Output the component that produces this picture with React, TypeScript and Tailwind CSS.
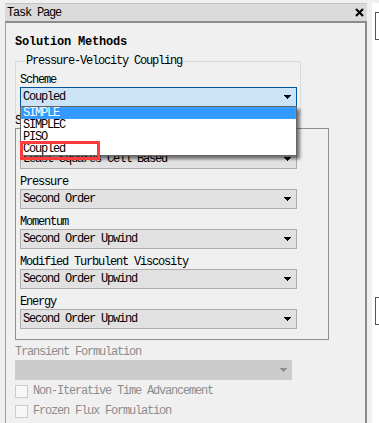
import React from 'react';

const Arrow = ({ disabled = false }: { disabled?: boolean }) => (
  <svg width="7" height="4" viewBox="0 0 7 4" shapeRendering="crispEdges" className="shrink-0">
    <g fill={disabled ? '#8f8f8f' : '#000'}>
      <rect x="0" y="0" width="7" height="1" />
      <rect x="1" y="1" width="5" height="1" />
      <rect x="2" y="2" width="3" height="1" />
      <rect x="3" y="3" width="1" height="1" />
    </g>
  </svg>
);

const Combo = ({ value, active = false }: { value: string; active?: boolean }) => (
  <div
    className={
      active
        ? 'w-[277px] h-[20px] flex items-center justify-between pl-[2px] pr-[5px] border border-[#005499] bg-[#cce4f7]'
        : 'w-[277px] h-[20px] flex items-center justify-between pl-[2px] pr-[5px] border border-[#adadad] bg-[#e1e1e1]'
    }
  >
    <span className="leading-[14px]">{value}</span>
    <Arrow />
  </div>
);

const Field = ({ label, value }: { label: string; value: string }) => (
  <div className="flex flex-col">
    <span className="h-[14px] leading-[14px]">{label}</span>
    <Combo value={value} />
  </div>
);

const Check = ({ label }: { label: string }) => (
  <div className="flex items-center gap-[5px] h-[13px]">
    <div className="w-[13px] h-[13px] border border-[#cccccc] bg-[#f7f7f7]" />
    <span className="leading-[13px] text-[#8d8d8d]">{label}</span>
  </div>
);

export default function App() {
  const items = ['SIMPLE', 'SIMPLEC', 'PISO', 'Coupled'];

  return (
    <div className="relative w-[379px] h-[423px] overflow-hidden flex bg-[#f0f0f0] text-black font-['Liberation_Mono',monospace] text-[12px] tracking-[-1.2px]">
      {/* Task page */}
      <div className="w-[367px] pl-[5px] flex flex-col">
        <div className="mt-[3px] h-[18px] flex justify-between pl-[2px] pr-[3px] bg-[#dadada] border-t border-[#c4c4c4]">
          <span className="pt-[2px] leading-[14px]">Task Page</span>
          <svg width="9" height="9" viewBox="0 0 9 9" className="mt-[4px]">
            <path d="M1 1 L8 8 M8 1 L1 8" stroke="#000" strokeWidth="2" />
          </svg>
        </div>

        <div className="flex-1 flex flex-col border-t-2 border-t-[#8a8a8a] border-l border-l-[#a0a0a0] border-r-2 border-r-[#8a8a8a] bg-[#f0f0f0]">
          <h2 className="mt-[12px] ml-[9px] text-[12px] tracking-[-0.2px] leading-[14px] font-bold">
            Solution Methods
          </h2>

          {/* Pressure-Velocity Coupling */}
          <div className="relative mt-[12px] ml-[9px] w-[286px] border border-[#d9d9d9] pt-[11px] pl-[4px] pb-[7px]">
            <span className="absolute -top-[8px] left-[9px] px-[1px] leading-[14px] bg-[#f0f0f0]">
              Pressure-Velocity Coupling
            </span>
            <span className="block h-[14px] leading-[14px]">Scheme</span>
            <Combo value="Coupled" active />
          </div>

          {/* Spatial Discretization */}
          <span className="ml-[9px] h-[13px] leading-[13px]">Spatial Discretization</span>
          <div className="ml-[9px] w-[314px] border border-[#8e8f8f] pt-[6px] pl-[4px] pb-[10px] flex flex-col gap-[6px]">
            <Field label="Gradient" value="Least Squares Cell Based" />
            <Field label="Pressure" value="Second Order" />
            <Field label="Momentum" value="Second Order Upwind" />
            <Field label="Modified Turbulent Viscosity" value="Second Order Upwind" />
            <Field label="Energy" value="Second Order Upwind" />
          </div>

          <span className="mt-[5px] ml-[9px] h-[14px] leading-[14px] text-[#8d8d8d]">Transient Formulation</span>
          <div className="mt-[1px] ml-[9px] w-[277px] h-[20px] flex items-center justify-end pr-[5px] bg-[#cccccc]">
            <Arrow disabled />
          </div>
          <div className="mt-[5px] ml-[9px] flex flex-col gap-[7px]">
            <Check label="Non-Iterative Time Advancement" />
            <Check label="Frozen Flux Formulation" />
          </div>
        </div>
      </div>

      {/* neighbouring pane edge */}
      <div className="flex-1 flex">
        <div className="ml-[5px] mt-[3px] flex-1 bg-white flex flex-col">
          <div className="mt-[9px] ml-[3px] h-[28px] border-l border-y border-[#555555]" />
          <div className="mt-[257px] ml-[3px] h-[28px] border-l border-y border-[#555555]" />
        </div>
      </div>

      {/* open scheme list */}
      <div className="absolute left-[20px] top-[106px] w-[277px] h-[50px] border border-[#646464] bg-white shadow-[3px_3px_3px_rgba(0,0,0,0.5)] flex flex-col">
        {items.map((item, i) => (
          <div
            key={item}
            className={
              i === 0
                ? 'h-[12px] leading-[10px] pl-[1px] bg-[#3399ff] text-white border border-dotted border-[#e0822c]'
                : 'h-[12px] leading-[12px] pl-[2px]'
            }
          >
            {item}
          </div>
        ))}
      </div>

      {/* highlight */}
      <div className="absolute left-[20px] top-[141px] w-[80px] h-[19px] border-[3px] border-[#ff3b3b]" />
    </div>
  );
}
